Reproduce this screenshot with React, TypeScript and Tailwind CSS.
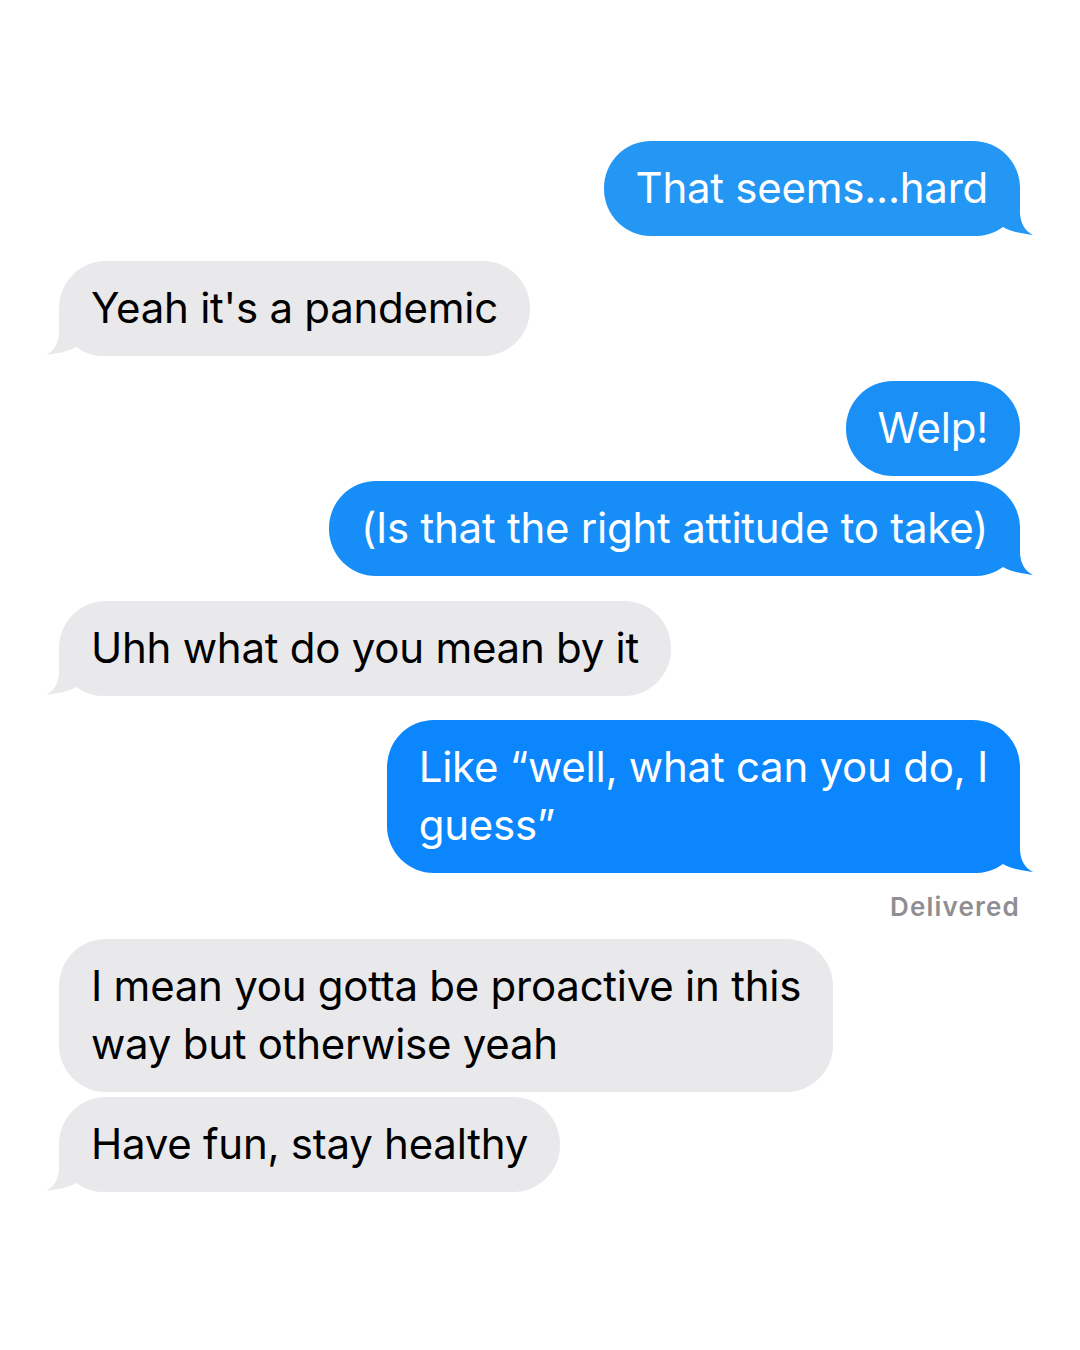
import React from 'react';

// Types
interface Message {
    id: number;
    from: 'me' | 'them';
    lines: string[];
    color: string;
    tail: boolean;
    gapTop: string;
}

const messages: Message[] = [
    { id: 1, from: 'me', lines: ['That seems...hard'], color: '#2496f4', tail: true, gapTop: 'mt-0' },
    { id: 2, from: 'them', lines: ["Yeah it's a pandemic"], color: '#e9e9eb', tail: true, gapTop: 'mt-[25px]' },
    { id: 3, from: 'me', lines: ['Welp!'], color: '#1a90f6', tail: false, gapTop: 'mt-[25px]' },
    { id: 4, from: 'me', lines: ['(Is that the right attitude to take)'], color: '#178ef7', tail: true, gapTop: 'mt-[5px]' },
    { id: 5, from: 'them', lines: ['Uhh what do you mean by it'], color: '#e9e9eb', tail: true, gapTop: 'mt-[25px]' },
    { id: 6, from: 'me', lines: ['Like \u201Cwell, what can you do, I', 'guess\u201D'], color: '#0b86fd', tail: true, gapTop: 'mt-[24px]' },
    { id: 7, from: 'them', lines: ['I mean you gotta be proactive in this', 'way but otherwise yeah'], color: '#e9e9eb', tail: false, gapTop: 'mt-[17px]' },
    { id: 8, from: 'them', lines: ['Have fun, stay healthy'], color: '#e9e9eb', tail: true, gapTop: 'mt-[5px]' },
];

// bubble tail, drawn over the bottom corner of the bubble
const Tail = ({ side, color }: { side: 'left' | 'right'; color: string }) => (
    <svg
        width="60"
        height="50"
        viewBox="0 0 60 50"
        className={side === 'right' ? 'absolute right-[-15px] bottom-0' : 'absolute left-[-15px] bottom-0 -scale-x-100'}
    >
        <path
            d="M0 0 L45 0 L45 28 C46 38 50 45 58 49 C50 48 36 46 28 41 C20 47 10 50 0 50 Z"
            fill={color}
        />
    </svg>
);

const Bubble = ({ msg }: { msg: Message }) => {
    const mine = msg.from === 'me';
    return (
        <div className={`flex ${mine ? 'justify-end' : 'justify-start'} ${msg.gapTop}`}>
            <div
                className={`relative rounded-[47px] pl-[32px] pr-[32px] pt-[18px] pb-[19px] text-[42px] tracking-[-0.25px] leading-[58px] whitespace-nowrap ${mine ? 'text-white' : 'text-black'}`}
                style={{ backgroundColor: msg.color }}
            >
                {msg.tail && <Tail side={mine ? 'right' : 'left'} color={msg.color} />}
                <div className="relative">
                    {msg.lines.map((line, i) => (
                        <div key={i}>{line}</div>
                    ))}
                </div>
            </div>
        </div>
    );
};

const App = () => (
    <div className="w-[1080px] h-[1350px] bg-white overflow-hidden" style={{ fontFamily: 'Inter, "Noto Sans", sans-serif' }}>
        <div className="pl-[59px] pr-[60px] pt-[141px]">
            {messages.map(msg => (
                <React.Fragment key={msg.id}>
                    <Bubble msg={msg} />
                    {msg.id === 6 && (
                        <div className="flex justify-end mt-[19px] text-[26px] tracking-[1.2px] leading-[30px] font-semibold text-[#8e8e93]">
                            Delivered
                        </div>
                    )}
                </React.Fragment>
            ))}
        </div>
    </div>
);

export default App;
